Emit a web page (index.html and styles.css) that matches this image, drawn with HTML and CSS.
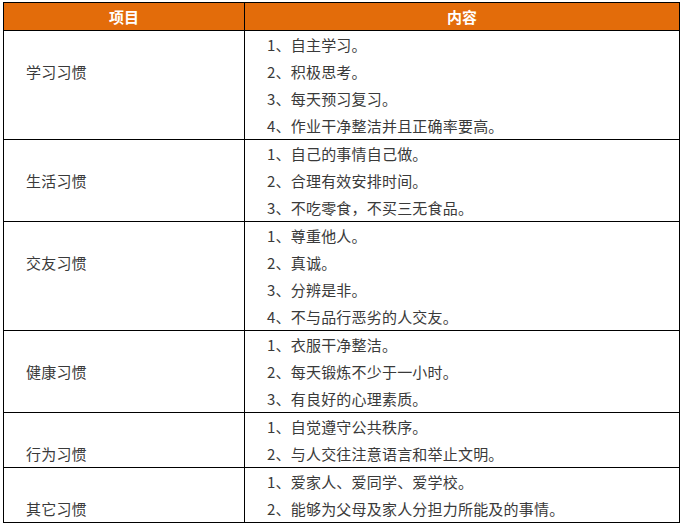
FILE: index.html
```html
<!DOCTYPE html>
<html lang="zh-CN">
<head>
<meta charset="utf-8">
<title>习惯</title>
<link rel="stylesheet" href="styles.css">
</head>
<body>
<table class="habits">
  <colgroup><col class="col-item"><col class="col-content"></colgroup>
  <thead>
    <tr><th>项目</th><th>内容</th></tr>
  </thead>
  <tbody>
    <tr>
      <td class="label">学习习惯</td>
      <td class="items">
        <p>1、自主学习。</p>
        <p>2、积极思考。</p>
        <p>3、每天预习复习。</p>
        <p>4、作业干净整洁并且正确率要高。</p>
      </td>
    </tr>
    <tr>
      <td class="label">生活习惯</td>
      <td class="items">
        <p>1、自己的事情自己做。</p>
        <p>2、合理有效安排时间。</p>
        <p>3、不吃零食，不买三无食品。</p>
      </td>
    </tr>
    <tr>
      <td class="label">交友习惯</td>
      <td class="items">
        <p>1、尊重他人。</p>
        <p>2、真诚。</p>
        <p>3、分辨是非。</p>
        <p>4、不与品行恶劣的人交友。</p>
      </td>
    </tr>
    <tr>
      <td class="label">健康习惯</td>
      <td class="items">
        <p>1、衣服干净整洁。</p>
        <p>2、每天锻炼不少于一小时。</p>
        <p>3、有良好的心理素质。</p>
      </td>
    </tr>
    <tr>
      <td class="label">行为习惯</td>
      <td class="items">
        <p>1、自觉遵守公共秩序。</p>
        <p>2、与人交往注意语言和举止文明。</p>
      </td>
    </tr>
    <tr>
      <td class="label">其它习惯</td>
      <td class="items">
        <p>1、爱家人、爱同学、爱学校。</p>
        <p>2、能够为父母及家人分担力所能及的事情。</p>
      </td>
    </tr>
  </tbody>
</table>
</body>
</html>
```

FILE: styles.css
```css
html, body {
  margin: 0;
  padding: 0;
  background: #ffffff;
}

body {
  padding: 2px 0 0 3px;
  font-family: "Noto Sans CJK SC", "Noto Sans", sans-serif;
  font-size: 15px;
  color: #3a3a3a;
}

.habits {
  border-collapse: collapse;
  width: 677px;
  table-layout: fixed;
}

.col-item {
  width: 241px;
}

.habits th,
.habits td {
  border: 1px solid #000000;
  padding: 0;
  line-height: 27px;
  vertical-align: top;
}

.habits th {
  background: #e36c0a;
  color: #ffffff;
  font-weight: bold;
  text-align: center;
  height: 27px;
}

.label {
  padding: 27px 0 0 22px !important;
  letter-spacing: 0.2px;
}

.items {
  padding-left: 22px !important;
  letter-spacing: 0.2px;
}

.items p {
  margin: 0;
  height: 27px;
  white-space: nowrap;
}
```
